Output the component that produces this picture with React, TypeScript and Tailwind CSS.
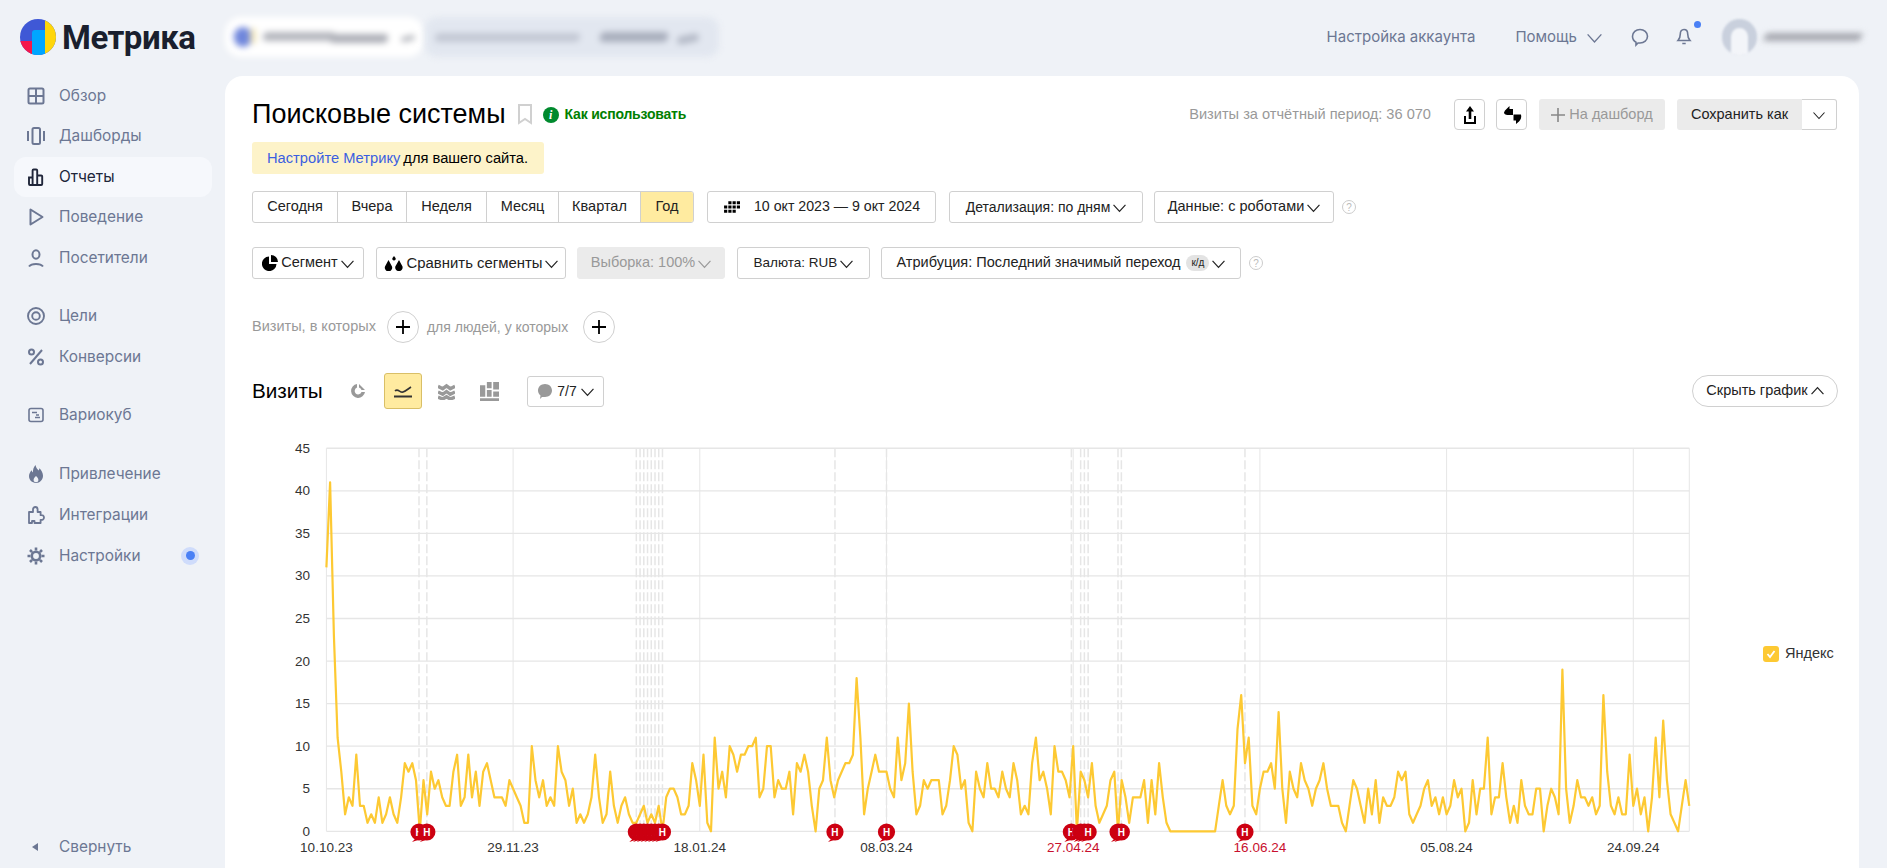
import { ReactNode } from "react";

const VISITS: number[] = [
  31, 41, 23, 11, 7, 2, 4, 3, 9, 3, 3, 1, 2, 1, 4, 1, 2, 4, 2, 1, 4, 8, 7, 8, 6, 0, 6, 2, 7, 5, 6, 4, 3, 3, 7, 9, 3, 4, 9, 4,
  7, 3, 7, 8, 6, 4, 4, 4, 3, 6, 5, 4, 3, 1, 1, 10, 6, 4, 6, 3, 4, 3, 10, 7, 6, 3, 5, 1, 2, 1, 2, 4, 9, 4, 1, 2, 7, 3, 1, 3,
  4, 2, 1, 1, 2, 3, 1, 2, 1, 3, 0, 4, 5, 5, 4, 2, 2, 3, 8, 6, 3, 9, 1, 0, 11, 5, 7, 4, 10, 9, 7, 9, 9, 10, 10, 11, 4, 5, 10, 10,
  4, 6, 5, 5, 7, 2, 8, 7, 9, 7, 3, 0, 5, 6, 11, 6, 4, 6,
  7, 8, 8, 9, 18, 11, 2, 5, 7, 9, 7, 7, 7, 5, 4, 11, 6, 8, 15, 7, 2, 3, 6, 5, 6, 6, 6, 2, 3, 6, 10, 9, 5, 6, 1, 0, 7, 5, 4, 8,
  5, 5, 4, 7, 5, 4, 8, 6, 2, 3, 2, 8, 11, 6, 7, 5, 2, 10, 7, 7, 6, 4, 10, 0, 7, 6, 4, 8, 3, 1, 2, 3, 6, 7, 0, 6, 4, 1, 4, 4,
  4, 6, 1, 6, 2, 8, 4, 1, 0, 0, 0, 0, 0, 0, 0, 0, 0, 0, 0, 0, 0, 3, 6, 3, 2, 3, 12, 16, 8, 11, 3, 2, 5, 7, 7, 8, 5, 14, 5, 1,
  7, 5, 4, 8, 6, 5, 3, 5, 6, 8, 5, 3, 3, 3, 1, 0, 3, 6, 5, 3, 1, 5, 2, 6, 1, 4, 3, 3, 4, 7,
  6, 7, 2, 1, 2, 3, 5, 6, 3, 4, 2, 4, 2, 3, 6, 4, 5, 0, 1, 6, 2, 5, 5, 11, 2, 4, 4, 8, 4, 1, 3, 1, 6, 3, 2, 2, 5, 5, 0, 3,
  5, 4, 2, 19, 5, 1, 3, 6, 4, 4, 3, 4, 2, 3, 16, 7, 3, 2, 4, 2, 2, 9, 3, 5, 2, 4, 0, 4, 11, 4, 13, 6, 2, 1, 0, 3, 6, 3,
];

const X_LABELS = [
  { day: 0, label: "10.10.23" },
  { day: 50, label: "29.11.23" },
  { day: 100, label: "18.01.24" },
  { day: 150, label: "08.03.24" },
  { day: 200, label: "27.04.24", red: true },
  { day: 250, label: "16.06.24", red: true },
  { day: 300, label: "05.08.24" },
  { day: 350, label: "24.09.24" },
];

const NOTE_DAYS = [24.8, 26.9, 83, 84, 85, 86, 87, 88, 89, 90, 136.2, 150, 199.5, 202, 203, 204, 212, 212.9, 246];

const px = (day: number) => 74.4 + 3.734 * day;
const py = (value: number) => 401.3 - 8.512 * value;

function Chevron({ className = "w-[13px] h-[13px]" }: { className?: string }) {
  return (
    <svg viewBox="0 0 12 12" className={className} fill="none" stroke="currentColor" strokeWidth="1.1">
      <path d="M.5 3.5 6 9.500l5.500-6" />
    </svg>
  );
}

const ICON = "w-[20px] h-[20px] shrink-0";

function NavIcon({ name }: { name: string }) {
  const common = { viewBox: "0 0 20 20", className: ICON, fill: "none", stroke: "currentColor", strokeWidth: 2 };
  switch (name) {
    case "overview":
      return (
        <svg {...common}>
          <rect x="2.5" y="2.5" width="15" height="15" rx="1.5" />
          <path d="M10 2.5v15M2.5 10h15" />
        </svg>
      );
    case "dash":
      return (
        <svg {...common}>
          <rect x="6.5" y="2" width="7.5" height="16" rx="1.5" />
          <path d="M2 5v10M18 5v10" />
        </svg>
      );
    case "reports":
      return (
        <svg {...common} strokeWidth={1.9}>
          <path d="M3 10.5h3.6V18H4a1 1 0 0 1-1-1zM6.6 18V3.5a1 1 0 0 1 1-1h2.6a1 1 0 0 1 1 1V18zM11.2 8.5h4a1 1 0 0 1 1 1V17a1 1 0 0 1-1 1h-4z" />
        </svg>
      );
    case "behavior":
      return (
        <svg {...common}>
          <path d="M4.5 2.5v15l12-7.5z" strokeLinejoin="round" />
        </svg>
      );
    case "visitors":
      return (
        <svg {...common}>
          <ellipse cx="10" cy="6.500" rx="3.500" ry="4.200" />
          <path d="M3 18.500c1.500-2 3.500-2.500 7-2.500s5.500.5 7 2.500" />
        </svg>
      );
    case "goals":
      return (
        <svg {...common} strokeWidth={1.9}>
          <circle cx="10" cy="10" r="8" />
          <circle cx="10" cy="10" r="3.800" />
        </svg>
      );
    case "conv":
      return (
        <svg {...common}>
          <circle cx="5.5" cy="5" r="2.5" />
          <circle cx="14.5" cy="15" r="2.5" />
          <path d="M16 3 4 17" />
        </svg>
      );
    case "vario":
      return (
        <svg {...common} strokeWidth={1.6}>
          <rect x="3" y="3.5" width="14" height="13" rx="2" />
          <path d="M6 7.5h5M9 12.5h5M13 10h-3" strokeWidth={1.4} />
        </svg>
      );
    case "flame":
      return (
        <svg viewBox="0 0 20 20" className={ICON} fill="currentColor">
          <path d="M9.5 1c.6 3.2 2 4.2 3.2 5.6.4-.8.6-1.5.6-2.4 2.2 2 3.7 4.7 3.7 7.6 0 4-3 7.2-7 7.2s-7-3-7-6.900c0-2.400 1.200-4.300 2.600-5.900.3 1 .7 1.700 1.400 2.200C6.800 5.800 7.600 3 9.500 1zM10 12c-1.500 1.500-2.400 2.600-2.400 4 0 1.300 1 2.300 2.400 2.300s2.400-1 2.400-2.300c0-1.400-.9-2.500-2.400-4z" fillRule="evenodd" />
        </svg>
      );
    case "puzzle":
      return (
        <svg {...common} strokeWidth={1.8} strokeLinejoin="round">
          <path d="M3 7h4V4.500C7 3 8 2 9.300 2s2.300 1 2.300 2.500V7h3v3.200c2-.4 3.400.6 3.400 2.300s-1.400 2.700-3.400 2.300V18H8.500v-2H6v2H3z" />
        </svg>
      );
    default:
      return (
        <svg {...common} strokeWidth={2.6}>
          <circle cx="10" cy="10" r="4.200" />
          <path d="M10 1.500v3M10 15.500v3M1.500 10h3M15.500 10h3M4 4l2.100 2.100M13.900 13.900 16 16M4 16l2.100-2.100M13.900 6.100 16 4" />
        </svg>
      );
  }
}

function NavItem({ icon, label, active, dot }: { icon: string; label: string; active?: boolean; dot?: boolean }) {
  return (
    <div
      className={`flex h-[40px] items-center gap-[13px] rounded-[12px] pl-[12px] text-[15.4px] ${
        active ? "bg-[#f6f8fc] text-[#20263a]" : "text-[#6c7793]"
      }`}
    >
      <NavIcon name={icon} />
      <span>{label}</span>
      {dot && (
        <span className="ml-auto mr-[13px] flex h-[18px] w-[18px] items-center justify-center rounded-full bg-[#cfdcfb]">
          <span className="h-[9px] w-[9px] rounded-full bg-[#4a80f5]" />
        </span>
      )}
    </div>
  );
}

function Sidebar() {
  return (
    <aside className="flex w-[225px] shrink-0 flex-col pl-[14px] pr-[13px] font-['Inter',sans-serif]">
      <div className="mt-[-0.5px] flex flex-col gap-[0.5px]">
        <NavItem icon="overview" label="Обзор" />
        <NavItem icon="dash" label="Дашборды" />
        <NavItem icon="reports" label="Отчеты" active />
        <NavItem icon="behavior" label="Поведение" />
        <NavItem icon="visitors" label="Посетители" />
      </div>
      <div className="mt-[18px] flex flex-col gap-[1px]">
        <NavItem icon="goals" label="Цели" />
        <NavItem icon="conv" label="Конверсии" />
      </div>
      <div className="mt-[18px]">
        <NavItem icon="vario" label="Вариокуб" />
      </div>
      <div className="mt-[19px] flex flex-col gap-[1px]">
        <NavItem icon="flame" label="Привлечение" />
        <NavItem icon="puzzle" label="Интеграции" />
        <NavItem icon="gear" label="Настройки" dot />
      </div>
      <div className="mb-[1px] mt-auto flex h-[40px] items-center pl-[18px] text-[15.4px] text-[#6c7793]">
        <span className="mr-[21px] h-0 w-0 border-y-[4px] border-r-[6px] border-y-transparent border-r-[#6c7793]" />
        Свернуть
      </div>
    </aside>
  );
}

function Logo() {
  return (
    <div className="flex w-[225px] shrink-0 items-center pl-[20px]">
      <svg viewBox="0 0 36 36" className="h-[36px] w-[36px]">
        <defs>
          <clipPath id="logo-clip">
            <circle cx="18" cy="18" r="18" />
          </clipPath>
        </defs>
        <g clipPath="url(#logo-clip)">
          <rect width="36" height="36" fill="#3f58d6" />
          <rect y="22" width="12" height="14" fill="#f5174b" />
          <rect x="25" width="11" height="36" fill="#ffd60a" />
          <path d="M12 36V14a3 3 0 0 1 3-3h10v25z" fill="#00a6ff" />
        </g>
      </svg>
      <span className="ml-[6px] font-['Roboto',sans-serif] text-[33px] font-bold leading-none tracking-[-0.5px] text-[#1a1f2e]">
        Метрика
      </span>
    </div>
  );
}

function TopBar() {
  return (
    <header className="flex h-[76px] items-center pb-[2px] font-['Inter',sans-serif] text-[#6c7793]">
      <Logo />
      <div className="flex h-[40px] items-center">
        <div className="relative h-[40px] w-[199px] rounded-[16px] bg-white blur-[3px]">
          <div className="absolute left-[9px] top-[10px] h-[20px] w-[18px] rounded-full bg-[#6f86dc]" />
          <div className="absolute left-[25px] top-[11px] h-[16px] w-[6px] rounded-full bg-[#f2e6b8]" />
          <div className="absolute left-[38px] top-[15px] h-[9px] w-[72px] -skew-x-12 rounded bg-[#b4b6bd]" />
          <div className="absolute left-[105px] top-[17px] h-[9px] w-[58px] -skew-x-12 rounded bg-[#adafb7]" />
          <div className="absolute left-[176px] top-[19px] h-[5px] w-[14px] -rotate-12 rounded bg-[#b4b6bd]" />
        </div>
        <div className="relative ml-[1px] h-[40px] w-[294px] rounded-[12px] bg-[#e2e7f0] blur-[3px]">
          <div className="absolute left-[10px] top-[16px] h-[9px] w-[145px] -skew-x-12 rounded bg-[#c3c8d4]" />
          <div className="absolute left-[175px] top-[15px] h-[10px] w-[68px] -skew-x-12 rounded bg-[#a8aebc]" />
          <div className="absolute left-[252px] top-[18px] h-[8px] w-[22px] -rotate-12 rounded bg-[#b4bac7]" />
        </div>
      </div>
      <div className="ml-auto flex items-center pr-[25px] font-['Inter',sans-serif] text-[15px]">
        <span>Настройка аккаунта</span>
        <span className="ml-[40px]">Помощь</span>
        <Chevron className="ml-[10px] h-[15px] w-[15px]" />
        <svg viewBox="0 0 20 20" className="ml-[28px] h-[20px] w-[20px]" fill="none" stroke="currentColor" strokeWidth="1.6">
          <path d="M10 2.500c4 0 7.500 2.800 7.500 6.800s-3.500 6.700-7.500 6.700H8L6 18v-2.800c-2-1.100-3.500-3.300-3.500-5.900 0-4 3.500-6.800 7.500-6.800z" />
        </svg>
        <div className="relative ml-[24px]">
          <svg viewBox="0 0 20 20" className="h-[20px] w-[20px]" fill="none" stroke="currentColor" strokeWidth="1.6">
            <path d="M10 2.500c2.500 0 3.700 2 3.700 4.500 0 3.300 1 5 2.300 6.500H4c1.300-1.500 2.300-3.200 2.300-6.500 0-2.500 1.200-4.500 3.700-4.500zM8.300 16.500h3.400" />
          </svg>
          <span className="absolute right-[-7px] top-[-6px] h-[7px] w-[7px] rounded-full bg-[#4a80f5]" />
        </div>
        <div className="ml-[28px] flex h-[36px] w-[35px] items-end justify-center overflow-hidden rounded-full bg-[#c9d0dd] blur-[1px]">
          <div className="h-[27px] w-[17px] rounded-t-full bg-[#f3f5f9]" />
        </div>
        <div className="ml-[7px] h-[8px] w-[98px] -skew-x-12 rounded bg-[#a6a8b0] blur-[3px]" />
      </div>
    </header>
  );
}

function Btn({
  w,
  children,
  muted,
  text = "",
}: {
  w: string;
  children: ReactNode;
  muted?: boolean;
  text?: string;
}) {
  return (
    <div
      className={`flex h-[32px] items-center justify-center gap-[3px] whitespace-nowrap rounded-[3px] border ${w} ${text} ${
        muted ? "border-[#ebebeb] bg-[#ebebeb] text-[#999]" : "border-[#d0d0d0] bg-white"
      }`}
    >
      {children}
    </div>
  );
}

function Help({ className = "" }: { className?: string }) {
  return (
    <span
      className={`flex h-[14px] w-[14px] items-center justify-center rounded-full border border-[#ccc] text-[10px] text-[#bbb] ${className}`}
    >
      ?
    </span>
  );
}

function Header() {
  return (
    <div className="flex h-[31px] items-center pr-[22px]">
      <h1 className="text-[27px] leading-none text-black">Поисковые системы</h1>
      <svg viewBox="0 0 14 21" className="ml-[12px] h-[21px] w-[14px]" fill="none" stroke="#d0d0d0" strokeWidth="2">
        <path d="M1 1h12v18l-6-4-6 4z" />
      </svg>
      <span className="ml-[11px] flex h-[16px] w-[16px] items-center justify-center rounded-full bg-[#008a2e] font-['Liberation_Serif',serif] text-[12px] font-bold italic text-white">
        i
      </span>
      <span className="ml-[6px] text-[14px] font-bold tracking-[-0.2px] text-[#008000]">Как использовать</span>
      <span className="ml-auto text-[14.6px] text-[#999]">Визиты за отчётный период: 36 070</span>
      <div className="ml-[23px] flex h-[31px] w-[31px] items-center justify-center rounded-[4px] border border-[#d0d0d0]">
        <svg viewBox="0 0 16 20" className="h-[20px] w-[16px]" fill="black">
          <path d="M8 1 12 6.500H9.300V14H6.700V6.500H4zM2 11h2v6h8v-6h2v8H2z" />
        </svg>
      </div>
      <div className="ml-[11px] flex h-[31px] w-[31px] items-center justify-center rounded-[4px] border border-[#d0d0d0]">
        <svg viewBox="0 0 20 20" className="h-[20px] w-[20px]" fill="black">
          <path d="M3 5.500 7.500 1v3H11v6H5.500C3.500 10 2 9 2 7.500zM11.500 9.500H19c.7 3-.2 5.200-2 7l-3 2.500v-3.500h-2.500z" />
        </svg>
      </div>
      <div className="ml-[12px] flex h-[31px] w-[126px] items-center justify-center rounded-[3px] bg-[#ebebeb] text-[#999]">
        <svg viewBox="0 0 14 14" className="mr-[4px] h-[14px] w-[14px]" stroke="#888" strokeWidth="1.600">
          <path d="M7 0v14M0 7h14" />
        </svg>
        На дашборд
      </div>
      <div className="ml-[12px] flex h-[31px]">
        <div className="flex w-[125px] items-center justify-center rounded-l-[3px] bg-[#ebebeb]">Сохранить как</div>
        <div className="flex w-[35px] items-center justify-center rounded-r-[3px] border border-l-0 border-[#d0d0d0]">
          <Chevron className="h-[12px] w-[12px]" />
        </div>
      </div>
    </div>
  );
}

function PeriodRow() {
  const items = [
    { label: "Сегодня", w: "w-[85px]" },
    { label: "Вчера", w: "w-[69px]" },
    { label: "Неделя", w: "w-[80px]" },
    { label: "Месяц", w: "w-[72px]" },
    { label: "Квартал", w: "w-[82px]" },
  ];
  return (
    <div className="mt-[17px] flex h-[32px] items-center">
      <div className="flex h-[32px] overflow-hidden rounded-[3px] border border-[#d0d0d0]">
        {items.map((item) => (
          <div key={item.label} className={`flex items-center justify-center border-r border-[#d0d0d0] ${item.w}`}>
            {item.label}
          </div>
        ))}
        <div className="flex w-[52px] items-center justify-center bg-[#ffeba0]">Год</div>
      </div>
      <div className="ml-[13px]">
        <Btn w="w-[229px]" text="text-[14.2px]">
          <svg viewBox="0 0 16 12" className="mr-[11px] h-[13px] w-[17px]" fill="black">
            <path d="M5 0h3v3H5zM9 0h3v3H9zM13 0h3v3h-3zM1 4h3v3H1zM5 4h3v3H5zM9 4h3v3H9zM13 4h3v3h-3zM1 8h3v3H1zM5 8h3v3H5zM9 8h3v3H9z" />
          </svg>
          10 окт 2023 — 9 окт 2024
        </Btn>
      </div>
      <div className="ml-[13px]">
        <Btn w="w-[194px]" text="text-[14px]">
          Детализация: по дням <Chevron />
        </Btn>
      </div>
      <div className="ml-[11px]">
        <Btn w="w-[180px]">
          Данные: с роботами <Chevron />
        </Btn>
      </div>
      <Help className="ml-[8px]" />
    </div>
  );
}

function FilterRow() {
  return (
    <div className="mt-[24px] flex h-[32px] items-center">
      <Btn w="w-[112px]">
        <svg viewBox="0 0 16 16" className="h-[16px] w-[16px]" fill="black">
          <path d="M7 1.500V9h7.500A7.300 7.300 0 1 1 7 1.500zM9 0a7 7 0 0 1 7 7H9z" />
        </svg>
        Сегмент <Chevron />
      </Btn>
      <div className="ml-[12px]">
        <Btn w="w-[190px]" text="text-[14.9px]">
          <svg viewBox="0 0 20 16" className="h-[16px] w-[20px]" fill="black">
            <path d="M4.500 5 8 11.500A3.700 3.700 0 1 1 1 11.500zM15 5l3.500 6.500a3.700 3.700 0 1 1-7.200 0zM10 1l1.500 2a1.700 1.700 0 1 1-3 0z" />
          </svg>
          Сравнить сегменты <Chevron />
        </Btn>
      </div>
      <div className="ml-[11px]">
        <Btn w="w-[148px]" muted>
          Выборка: 100% <Chevron />
        </Btn>
      </div>
      <div className="ml-[12px]">
        <Btn w="w-[133px]" text="text-[13.5px]">
          Валюта: RUB <Chevron />
        </Btn>
      </div>
      <div className="ml-[11px]">
        <Btn w="w-[360px]">
          Атрибуция: Последний значимый переход
          <span className="ml-[3px] rounded-[8px] bg-[#e3e3e3] px-[5px] text-[10px] leading-[16px]">к/д</span>
          <Chevron />
        </Btn>
      </div>
      <Help className="ml-[8px]" />
    </div>
  );
}

function PlusCircle() {
  return (
    <span className="flex h-[32px] w-[32px] items-center justify-center rounded-full border border-[#d0d0d0]">
      <svg viewBox="0 0 14 14" className="h-[14px] w-[14px]" stroke="black" strokeWidth="1.800">
        <path d="M7 0v14M0 7h14" />
      </svg>
    </span>
  );
}

function ConditionRow() {
  return (
    <div className="mt-[32px] flex h-[32px] items-center text-[#999]">
      <span>Визиты, в которых</span>
      <span className="ml-[11px]">
        <PlusCircle />
      </span>
      <span className="ml-[8px] text-[14px]">для людей, у которых</span>
      <span className="ml-[15px]">
        <PlusCircle />
      </span>
    </div>
  );
}

function ChartToolbar() {
  return (
    <div className="mt-[30px] flex h-[36px] items-center pr-[21px]">
      <span className="w-[69px] text-[20.7px] leading-none text-black">Визиты</span>
      <svg viewBox="0 0 16 16" className="ml-[29px] h-[16px] w-[16px]" fill="#999">
        <path d="M7 1a7 7 0 1 0 8 8h-3.500A3.500 3.500 0 1 1 7 4.600zM9 1l6 6h-3.500A3.500 3.500 0 0 0 9 4.500z" />
      </svg>
      <div className="ml-[18px] flex h-[36px] w-[38px] items-center justify-center rounded-[3px] border border-[#d9bf67] bg-[#ffeba0]">
        <svg viewBox="0 0 18 14" className="h-[14px] w-[18px]" fill="none" stroke="#333" strokeWidth="1.600">
          <path d="M1 7c3-3 5 2 8 1s5-3 8-5" />
          <path d="M0 12.500h18" strokeWidth="2" />
        </svg>
      </div>
      <svg viewBox="0 0 18 18" className="ml-[16px] h-[17px] w-[17px]" fill="none" stroke="#999" strokeWidth="3.600">
        <path d="M0 3.500 5 6l4-3 4 3 5-2.500M0 9.500 5 12l4-3 4 3 5-2.500M0 15l5 2 4-2.500 4 2.500 5-2" />
      </svg>
      <svg viewBox="0 0 18 18" className="ml-[25px] h-[19px] w-[19px]" fill="#999">
        <path d="M0 3h5v11H0zM6.500 0H11v6H6.500zM6.500 7.500H11V14H6.500zM12.500 0H18v7h-5.500zM12.500 9H18v5h-5.500zM0 15.500h18V18H0z" />
      </svg>
      <div className="ml-[28px] flex h-[31px] w-[77px] items-center justify-center gap-[4px] rounded-[3px] border border-[#d0d0d0] text-[14px]">
        <svg viewBox="0 0 16 16" className="h-[16px] w-[16px]" fill="#999">
          <path d="M8 1c4 0 7 2.800 7 6.500S12 14 8 14H5l-2 2 .5-3.500C2 11.300 1 9.500 1 7.500 1 3.800 4 1 8 1z" />
        </svg>
        7/7 <Chevron />
      </div>
      <div className="ml-auto flex h-[32px] w-[146px] items-center justify-center gap-[3px] rounded-full border border-[#d0d0d0]">
        Скрыть график
        <Chevron className="h-[13px] w-[13px] rotate-180" />
      </div>
    </div>
  );
}

function Marker({ day }: { day: number }) {
  const x = px(day);
  return (
    <g>
      <path d={`M${x - 3} 408 L${x - 7} 412 L${x + 2} 409 Z`} fill="#cc0011" />
      <circle cx={x} cy={402} r={8.6} fill="#cc0011" />
      <text x={x} y={405.5} textAnchor="middle" fontSize="10" fontWeight="700" fill="white">
        Н
      </text>
    </g>
  );
}

function VisitsChart() {
  const points = VISITS.map((v, d) => `${px(d).toFixed(1)},${py(v).toFixed(1)}`).join(" ");
  const yTicks = [0, 5, 10, 15, 20, 25, 30, 35, 40, 45];
  return (
    <svg width="1480" height="438" className="shrink-0 font-['Liberation_Sans',sans-serif]">
      {yTicks.map((t) => (
        <g key={t}>
          <line x1={px(0)} x2={px(365)} y1={py(t)} y2={py(t)} stroke="#e6e6e6" strokeWidth="1.300" />
          <text x="58" y={py(t) + 4.5} textAnchor="end" fontSize="13.500" fill="#333">
            {t}
          </text>
        </g>
      ))}
      {[0, 50, 100, 150, 200, 250, 300, 350, 365].map((d) => (
        <line key={d} x1={px(d)} x2={px(d)} y1={py(45)} y2={py(0)} stroke="#e6e6e6" strokeWidth="1" />
      ))}
      {NOTE_DAYS.map((d) => (
        <line key={d} x1={px(d)} x2={px(d)} y1={py(45)} y2={py(0)} stroke="#e6e6e6" strokeWidth="1.500" strokeDasharray="9 3" />
      ))}
      <polyline points={points} fill="none" stroke="#fdc933" strokeWidth="2.200" strokeLinejoin="round" />
      {NOTE_DAYS.map((d) => (
        <Marker key={d} day={d} />
      ))}
      {X_LABELS.map((l) => (
        <text key={l.day} x={px(l.day)} y={422} textAnchor="middle" fontSize="13.500" fill={l.red ? "#c8102e" : "#333"}>
          {l.label}
        </text>
      ))}
    </svg>
  );
}

function Legend() {
  return (
    <div className="ml-[31px] mt-[216px] flex h-[16px] items-center">
      <span className="flex h-[16px] w-[16px] items-center justify-center rounded-[3px] bg-[#fdc933]">
        <svg viewBox="0 0 12 12" className="h-[12px] w-[12px]" fill="none" stroke="white" strokeWidth="1.800">
          <path d="m2.500 6 2.500 3 4.500-6" />
        </svg>
      </span>
      <span className="ml-[6px] text-[#333]">Яндекс</span>
    </div>
  );
}

export default function App() {
  return (
    <div className="h-[868px] w-[1887px] overflow-hidden bg-[#eff2f7] font-['Liberation_Sans',sans-serif] text-[14.5px] text-[#222]">
      <TopBar />
      <div className="flex h-[792px]">
        <Sidebar />
        <main className="w-[1634px] rounded-t-[18px] bg-white pl-[27px] pt-[23px]">
          <Header />
          <div className="mt-[12px] flex h-[32px] w-[292px] items-center rounded-[3px] bg-[#fdf3c9] pl-[15px] text-[14.7px]">
            <span className="text-[#3b5fe0]">Настройте Метрику</span>
            <span className="ml-[3px] text-black">для вашего сайта.</span>
          </div>
          <PeriodRow />
          <FilterRow />
          <ConditionRow />
          <ChartToolbar />
          <div className="mt-[21px] flex">
            <VisitsChart />
            <Legend />
          </div>
        </main>
      </div>
    </div>
  );
}
